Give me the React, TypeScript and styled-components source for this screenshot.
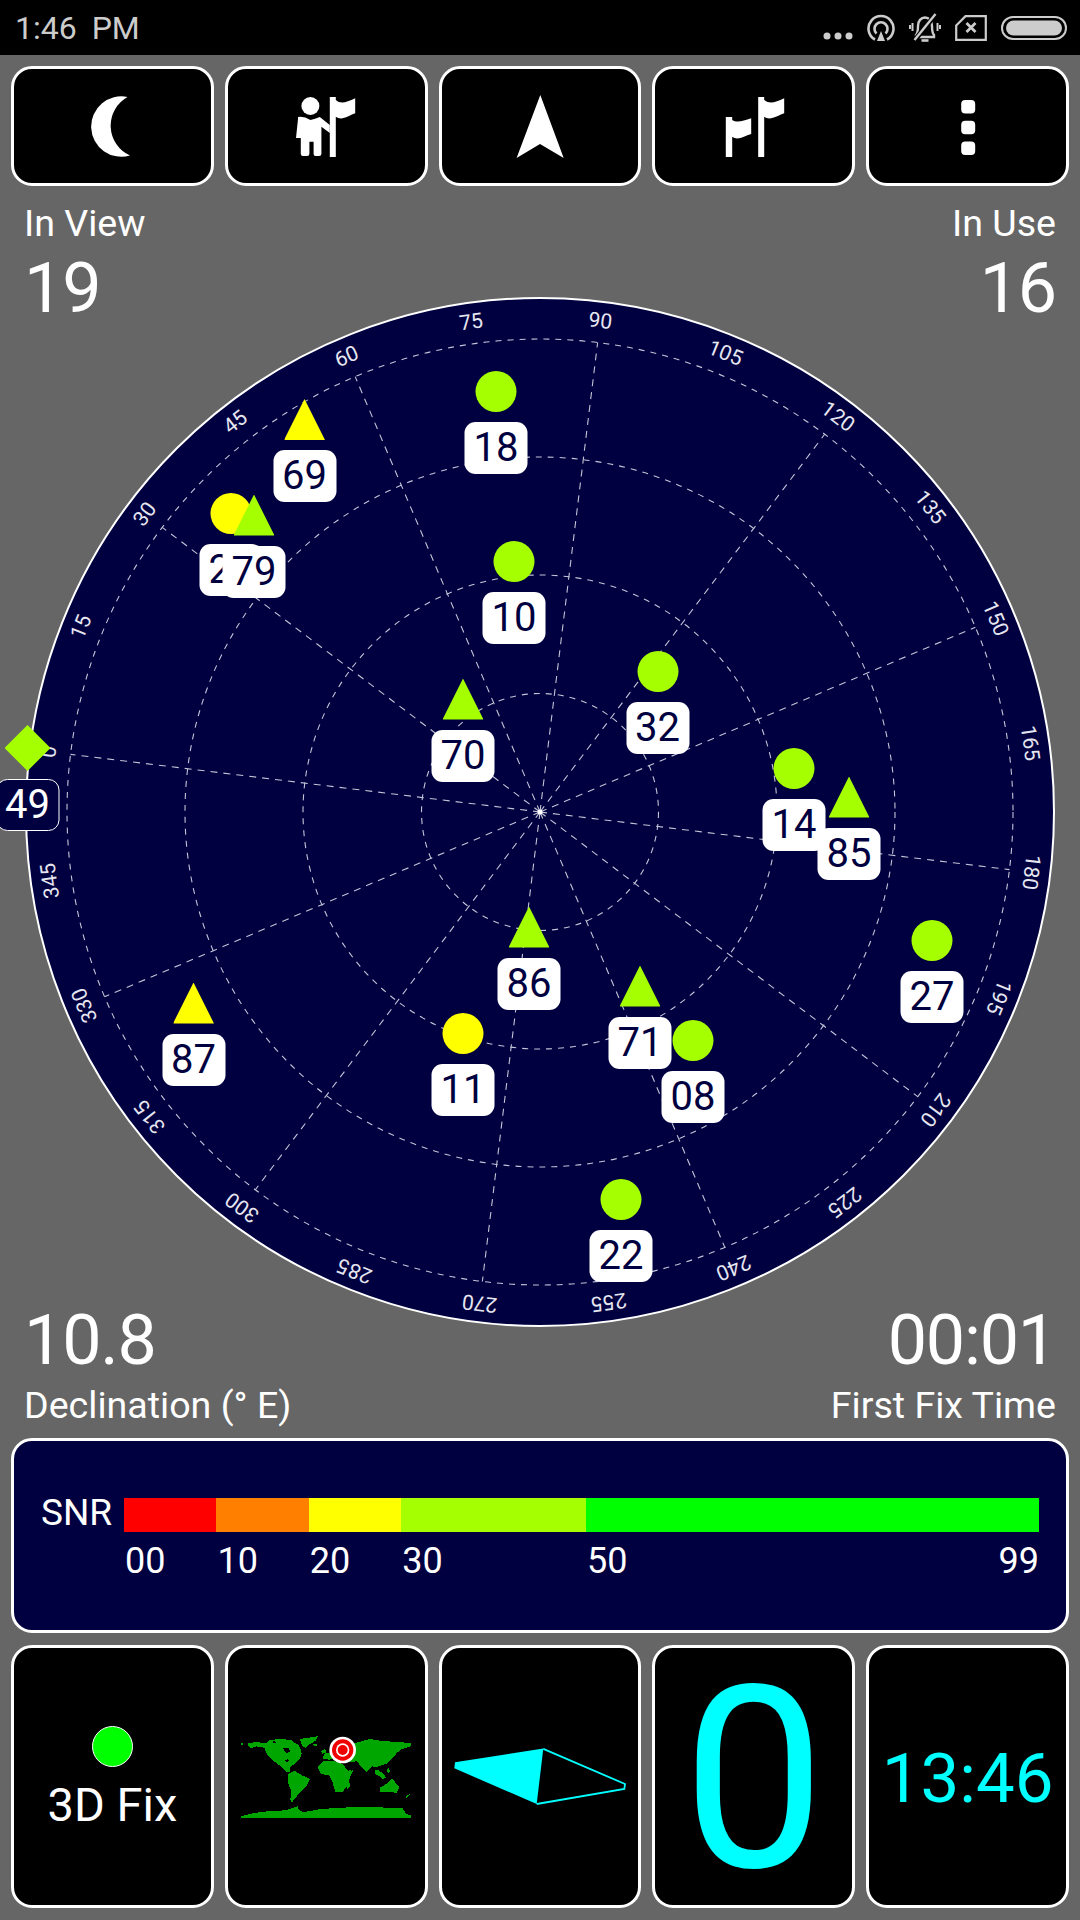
import styled, { createGlobalStyle } from "styled-components"

const GlobalStyle = createGlobalStyle`
    html, body {
        margin: 0;
        padding: 0;
        background: #666666;
        overflow: hidden;
    }
    * {
        box-sizing: border-box;
    }
`

const NAVY = "#000040"
const LIME = "#a6ff00"
const YELLOW = "#ffff00"
const CYAN = "#00ffff"

const Page = styled.div`
    width: 1080px;
    height: 1920px;
    display: flex;
    flex-direction: column;
    background: #666666;
    color: #fff;
    font-family: Roboto, "Liberation Sans", sans-serif;
    overflow: hidden;
`

const StatusBar = styled.div`
    height: 55px;
    flex: none;
    background: #000;
    display: flex;
    align-items: center;
    justify-content: space-between;
    padding: 0 13px 0 15px;
    color: #cccccc;
`

const Clock = styled.span`
    font-size: 32px;
    font-weight: 400;
    word-spacing: 7px;
    line-height: 55px;
    padding-top: 2px;
`

const StatusIcons = styled.div`
    display: flex;
    align-items: center;
    gap: 14px;
`

const Toolbar = styled.div`
    flex: none;
    display: grid;
    grid-template-columns: repeat(5, 1fr);
    gap: 11px;
    padding: 11px 11px 0;
`

const Tile = styled.div<{ $height: number }>`
    height: ${(p) => p.$height}px;
    background: #000;
    border: 3px solid #fff;
    border-radius: 21px;
    display: flex;
    flex-direction: column;
    align-items: center;
    justify-content: center;
`

const PlotSection = styled.div`
    flex: 1;
    min-height: 0;
    display: grid;
    grid-template: 1fr / 1fr;
`

const Dial = styled.div`
    grid-area: 1 / 1;
    place-self: center;
    position: relative;
    width: 1080px;
    height: 1040px;
`

const StatRow = styled.div<{ $bottom?: boolean }>`
    grid-area: 1 / 1;
    align-self: ${(p) => (p.$bottom ? "end" : "start")};
    display: flex;
    justify-content: space-between;
    padding: ${(p) => (p.$bottom ? "0 24px 11px 24px" : "15px 24px 0 24px")};
    position: relative;
`

const Stat = styled.div<{ $right?: boolean }>`
    display: flex;
    flex-direction: column;
    gap: 3px;
    align-items: ${(p) => (p.$right ? "flex-end" : "flex-start")};
`

const StatLabel = styled.div`
    font-size: 37.6px;
    line-height: 44px;
`

const StatValue = styled.div`
    font-size: 70px;
    line-height: 80px;
    letter-spacing: -1.2px;
`

const Sat = styled.div<{ $x: number; $y: number }>`
    position: absolute;
    left: ${(p) => p.$x}px;
    top: ${(p) => p.$y - 20.5}px;
    transform: translateX(-50%);
    display: flex;
    flex-direction: column;
    align-items: center;
    gap: 10px;
`

const Marker = styled.div<{ $shape: "circle" | "tri" | "dia"; $color: string }>`
    width: 41px;
    height: 41px;
    background: ${(p) => p.$color};
    border-radius: ${(p) => (p.$shape === "circle" ? "50%" : "0")};
    ${(p) => p.$shape === "tri" && "clip-path: polygon(50% 0, 100% 100%, 0 100%);"}
    ${(p) =>
        p.$shape === "dia" &&
        "clip-path: polygon(50% 0, 100% 50%, 50% 100%, 0 50%); width: 46px; height: 46px; margin: -2.5px 0;"}
`

const SatTag = styled.div<{ $dark?: boolean }>`
    width: 63px;
    height: 52px;
    border-radius: 11px;
    background: ${(p) => (p.$dark ? NAVY : "#fff")};
    color: ${(p) => (p.$dark ? "#fff" : NAVY)};
    border: ${(p) => (p.$dark ? "1.5px solid #fff" : "none")};
    font-size: 40px;
    line-height: ${(p) => (p.$dark ? "49px" : "52px")};
    text-align: center;
    white-space: nowrap;
    overflow: hidden;
`

const SnrPanel = styled.div`
    flex: none;
    height: 195px;
    margin: 0 11px;
    padding: 57px 27px 0;
    background: ${NAVY};
    border: 3px solid #fff;
    border-radius: 21px;
`

const SnrRow = styled.div`
    display: flex;
    height: 34px;
`

const SnrTitle = styled.div`
    width: 83px;
    flex: none;
    font-size: 37px;
    line-height: 30px;
`

const SnrBand = styled.div<{ $span: number; $color: string }>`
    flex: ${(p) => p.$span};
    background: ${(p) => p.$color};
`

const ScaleRow = styled.div`
    display: flex;
    margin: 9px 0 0 84px;
`

const ScaleCell = styled.div<{ $span: number }>`
    flex: ${(p) => p.$span};
    display: flex;
    justify-content: space-between;
    font-size: 36px;
    line-height: 40px;
`

const BottomRow = styled.div`
    flex: none;
    display: grid;
    grid-template-columns: repeat(5, 1fr);
    gap: 11px;
    padding: 12px 11px;
`

const FixDot = styled.div`
    width: 41px;
    height: 41px;
    border-radius: 50%;
    background: #00ff00;
    border: 1.5px solid #fff;
    margin-top: 5px;
`

const FixLabel = styled.div`
    font-size: 47px;
    line-height: 54px;
    margin-top: 11px;
`

const BigZero = styled.div`
    font-size: 254px;
    line-height: 250px;
    margin-top: 6px;
    color: ${CYAN};
`

const ClockValue = styled.div`
    font-size: 69px;
    line-height: 80px;
    margin-top: 4px;
    color: ${CYAN};
`

const CX = 540
const CY = 520
const TILT = 7

const polar = (angle: number, r: number) => {
    const t = ((angle + TILT) * Math.PI) / 180
    return { x: CX - r * Math.cos(t), y: CY - r * Math.sin(t) }
}

const spokes = Array.from({ length: 12 }, (_, i) => i * 30)
const ticks = Array.from({ length: 24 }, (_, i) => i * 15)

// marker centres, inside the dial box
const sats = [
    { id: "18", x: 496, y: 99, shape: "circle", color: LIME },
    { id: "69", x: 304.5, y: 127.5, shape: "tri", color: YELLOW },
    { id: "27", x: 231, y: 221, shape: "circle", color: YELLOW },
    { id: "79", x: 254, y: 223, shape: "tri", color: LIME },
    { id: "10", x: 514, y: 269, shape: "circle", color: LIME },
    { id: "32", x: 657.5, y: 379, shape: "circle", color: LIME },
    { id: "70", x: 463, y: 407, shape: "tri", color: LIME },
    { id: "14", x: 794, y: 476, shape: "circle", color: LIME },
    { id: "85", x: 849, y: 505, shape: "tri", color: LIME },
    { id: "49", x: 27.5, y: 456, shape: "dia", color: LIME },
    { id: "86", x: 529, y: 635, shape: "tri", color: LIME },
    { id: "27", x: 932, y: 648, shape: "circle", color: LIME },
    { id: "87", x: 193.5, y: 711, shape: "tri", color: YELLOW },
    { id: "11", x: 463, y: 741.5, shape: "circle", color: YELLOW },
    { id: "71", x: 640, y: 694, shape: "tri", color: LIME },
    { id: "08", x: 693, y: 748, shape: "circle", color: LIME },
    { id: "22", x: 621, y: 907, shape: "circle", color: LIME },
] as const

const PolarGrid = () => (
    <svg width="1080" height="1040" viewBox="0 0 1080 1040" style={{ display: "block" }}>
        <circle cx={CX} cy={CY} r={514} fill={NAVY} stroke="#fff" strokeWidth="2" />
        {[118.5, 237, 355, 473].map((r) => (
            <circle
                key={r}
                cx={CX}
                cy={CY}
                r={r}
                fill="none"
                stroke="#c4c4d8"
                strokeWidth="1.1"
                strokeDasharray="6 6"
            />
        ))}
        {spokes.map((a) => {
            const end = polar(a, 473)
            return (
                <line
                    key={a}
                    x1={CX}
                    y1={CY}
                    x2={end.x}
                    y2={end.y}
                    stroke="#c4c4d8"
                    strokeWidth="1.1"
                    strokeDasharray="7 6"
                />
            )
        })}
        <circle cx={CX} cy={CY} r={2.5} fill="#fff" />
        {ticks.map((a) => {
            const p = polar(a, 495)
            return (
                <text
                    key={a}
                    x={p.x}
                    y={p.y}
                    fill="#e6e6f0"
                    fontFamily="Roboto, sans-serif"
                    fontSize="21"
                    textAnchor="middle"
                    dominantBaseline="central"
                    transform={`rotate(${a + TILT - 90} ${p.x} ${p.y})`}
                >
                    {a}
                </text>
            )
        })}
    </svg>
)

const MoonIcon = () => (
    <svg width="64" height="64" viewBox="0 0 64 64">
        <path d="M47.5 3A30.2 30.2 0 1 0 50 61.5A32.75 32.75 0 0 1 47.5 3Z" fill="#fff" />
    </svg>
)

const BIG_FLAG = "M36.2 3H42.2V63H36.2Z M42.2 6C47 10 53 9 62.2 4.3V19.3C55 22 48 27 42.2 22.7Z"

const PersonFlagIcon = () => (
    <svg width="64" height="64" viewBox="0 0 64 64">
        <circle cx="16.4" cy="12" r="9" fill="#fff" />
        <path
            d="M4 23Q10 22 16.4 26Q21 25 25.8 23L35.8 31V39L27.4 32.7V60Q27.4 62 25 62H21.5Q19.6 62 19.6 60V47.7H15.4V60Q15.4 62 13 62H9Q6.8 62 6.8 60V44H2L4 25Z"
            fill="#fff"
        />
        <path d="M35.8 3H41.8V63H35.8Z M41.8 6C46 10 52 9 61.2 4.3V19.3C54 22 48 27 41.8 22.7Z" fill="#fff" />
    </svg>
)

const ArrowIcon = () => (
    <svg width="64" height="64" viewBox="0 0 64 64">
        <path d="M32.3 1L55.7 64L32 50L8.6 64Z" fill="#fff" />
    </svg>
)

const FlagsIcon = () => (
    <svg width="64" height="64" viewBox="0 0 64 64">
        <path d="M3.8 23H10.2V63H3.8Z M10.2 26C15 29 21 27 29.2 24.3V40C22 42 16 47 10.2 42.7Z" fill="#fff" />
        <path d={BIG_FLAG} fill="#fff" />
    </svg>
)

const MenuIcon = () => (
    <svg width="64" height="64" viewBox="0 0 64 64">
        <rect x="25.2" y="6" width="14" height="13.5" rx="4" fill="#fff" />
        <rect x="25.2" y="26.7" width="14" height="13.5" rx="4" fill="#fff" />
        <rect x="25.2" y="47.5" width="14" height="13.5" rx="4" fill="#fff" />
    </svg>
)

const DotsIcon = () => (
    <svg width="30" height="28" viewBox="0 0 30 28">
        <circle cx="4" cy="22" r="3.5" fill="#ccc" />
        <circle cx="15" cy="22" r="3.5" fill="#ccc" />
        <circle cx="26" cy="22" r="3.5" fill="#ccc" />
    </svg>
)

const CastIcon = () => (
    <svg width="28" height="28" viewBox="0 0 28 28" fill="none" stroke="#ccc" strokeWidth="2.6">
        <path d="M8 25.5A12.5 12.5 0 1 1 20 25.5" />
        <path d="M9.5 19.5A6.5 6.5 0 1 1 18.5 19.5" />
        <path d="M14 17L18 27H10Z" fill="#ccc" stroke="none" />
    </svg>
)

const BellIcon = () => (
    <svg width="32" height="30" viewBox="0 0 32 30" fill="none" stroke="#ccc" strokeWidth="2.4">
        <path d="M7 22C9 20 9 17 9 13C9 8 12 4.5 16 4.5C20 4.5 23 8 23 13C23 17 23 20 25 22V24H7Z" />
        <path d="M12.5 27.5H19.5" strokeWidth="2.6" />
        <path d="M27 1L5 28" stroke="#000" strokeWidth="5" />
        <path d="M26.5 1L5.5 27" />
        <path d="M3.5 10V18M1 12V16M28.5 10V18M31 12V16" strokeWidth="2" />
    </svg>
)

const SimIcon = () => (
    <svg width="32" height="26" viewBox="0 0 32 26" fill="none" stroke="#ccc" strokeWidth="2.2">
        <path d="M1.2 10.5L10.5 1.2H30.8V24.8H1.2Z" />
        <path d="M11.5 8L20.5 17M20.5 8L11.5 17" strokeWidth="2.8" />
    </svg>
)

const BatteryIcon = () => (
    <svg width="66" height="24" viewBox="0 0 66 24">
        <rect x="1" y="1" width="64" height="22" rx="11" fill="none" stroke="#ccc" strokeWidth="2" />
        <rect x="5" y="4.5" width="56" height="15" rx="7.5" fill="#ccc" />
    </svg>
)

const LAND = [
    // north america
    "M15 42L22 42L22 48L15 48Z M35 44L60 39L82 42L95 40L100 33L135 30L165 33L176 42L186 46L195 62L197 74L190 92L178 103L165 112L160 120L163 128L150 128L135 112L118 100L104 88L94 78L85 56L60 52L45 58L38 54Z",
    // greenland
    "M190 30L245 22L240 35L222 45L208 56L200 52L195 40Z",
    // south america
    "M155 135L175 125L200 140L222 150L212 170L192 190L180 205L168 220L163 212L166 185L155 160Z",
    // africa
    "M245 115L262 96L290 95L320 105L335 125L352 122L342 145L335 170L320 188L298 190L290 160L280 140L255 135Z",
    // eurasia
    "M258 88L268 72L285 70L290 48L340 45L358 42L400 30L440 36L525 42L525 52L498 60L482 72L470 88L450 105L435 110L420 114L408 112L392 130L378 116L362 96L350 100L335 98L325 92L300 94L280 92Z",
    // islands
    "M256 66L268 60L270 72L258 74Z M232 46L244 44L244 50L234 52Z M415 125L425 122L440 132L450 145L440 150L428 140L418 135Z M452 122L458 118L462 128L455 132Z M440 90L448 86L452 96L444 100Z",
    // madagascar
    "M334 166L342 160L342 174L334 180Z",
    // australia
    "M432 176L450 165L468 150L478 160L490 175L482 192L462 188L445 188L432 190Z",
    // new zealand
    "M508 204L515 198L522 194L520 200L512 208Z",
    // antarctica
    "M15 262L55 252L100 246L150 244L185 232L188 240L200 250L255 240L340 235L430 235L500 238L510 255L525 260V268H15Z",
]

// hudson bay, great lakes, arctic channel, mediterranean and the red sea
const WATER = [
    "M142 58L157 56L162 67L151 73L144 66Z",
    "M146 94L156 90L160 96L150 99Z",
    "M110 37L124 38L120 42L112 41Z",
    "M272 92L308 90L320 94L300 96Z",
    "M331 106L335 106L349 124L345 125Z",
]

const WorldMap = () => (
    <svg width="180" height="95" viewBox="0 0 540 285">
        {LAND.map((d) => (
            <path key={d.slice(0, 12)} d={d} fill="#00a600" shapeRendering="crispEdges" />
        ))}
        {WATER.map((d) => (
            <path key={d.slice(0, 12)} d={d} fill="#000" shapeRendering="crispEdges" />
        ))}
        <circle cx="320" cy="63" r="40" fill="#fff" />
        <circle cx="320" cy="63" r="32" fill="#f00000" />
        <circle cx="320" cy="63" r="20" fill="#fff" />
        <circle cx="320" cy="63" r="15" fill="#f00000" />
    </svg>
)

const CompassIcon = () => (
    <svg width="172" height="57" viewBox="0 0 172 57">
        <polygon points="1,14.3 89.3,0.5 82.7,56 0.3,20.3" fill={CYAN} />
        <polyline
            points="89.3,0.8 171,36 170.3,41 82.7,56"
            fill="none"
            stroke={CYAN}
            strokeWidth="1.8"
        />
    </svg>
)

const App = () => {
    return (
        <Page>
            <GlobalStyle />

            <StatusBar>
                <Clock>1:46 PM</Clock>
                <StatusIcons>
                    <DotsIcon />
                    <CastIcon />
                    <BellIcon />
                    <SimIcon />
                    <BatteryIcon />
                </StatusIcons>
            </StatusBar>

            <Toolbar>
                <Tile $height={120}><MoonIcon /></Tile>
                <Tile $height={120}><PersonFlagIcon /></Tile>
                <Tile $height={120}><ArrowIcon /></Tile>
                <Tile $height={120}><FlagsIcon /></Tile>
                <Tile $height={120}><MenuIcon /></Tile>
            </Toolbar>

            <PlotSection>
                <Dial>
                    <PolarGrid />
                    {sats.map((s) => (
                        <Sat key={`${s.id}-${s.x}`} $x={s.x} $y={s.y}>
                            <Marker $shape={s.shape} $color={s.color} />
                            <SatTag $dark={s.shape === "dia"}>{s.id}</SatTag>
                        </Sat>
                    ))}
                </Dial>

                <StatRow>
                    <Stat>
                        <StatLabel>In View</StatLabel>
                        <StatValue>19</StatValue>
                    </Stat>
                    <Stat $right>
                        <StatLabel>In Use</StatLabel>
                        <StatValue>16</StatValue>
                    </Stat>
                </StatRow>

                <StatRow $bottom>
                    <Stat>
                        <StatValue>10.8</StatValue>
                        <StatLabel>Declination (° E)</StatLabel>
                    </Stat>
                    <Stat $right>
                        <StatValue>00:01</StatValue>
                        <StatLabel>First Fix Time</StatLabel>
                    </Stat>
                </StatRow>
            </PlotSection>

            <SnrPanel>
                <SnrRow>
                    <SnrTitle>SNR</SnrTitle>
                    <SnrBand $span={10} $color="#ff0000" />
                    <SnrBand $span={10} $color="#ff8000" />
                    <SnrBand $span={10} $color="#ffff00" />
                    <SnrBand $span={20} $color="#a6ff00" />
                    <SnrBand $span={49} $color="#00ff00" />
                </SnrRow>
                <ScaleRow>
                    <ScaleCell $span={10}>00</ScaleCell>
                    <ScaleCell $span={10}>10</ScaleCell>
                    <ScaleCell $span={10}>20</ScaleCell>
                    <ScaleCell $span={20}>30</ScaleCell>
                    <ScaleCell $span={48.9}>
                        <span>50</span>
                        <span>99</span>
                    </ScaleCell>
                </ScaleRow>
            </SnrPanel>

            <BottomRow>
                <Tile $height={263}>
                    <FixDot />
                    <FixLabel>3D Fix</FixLabel>
                </Tile>
                <Tile $height={263}><WorldMap /></Tile>
                <Tile $height={263}><CompassIcon /></Tile>
                <Tile $height={263}><BigZero>0</BigZero></Tile>
                <Tile $height={263}><ClockValue>13:46</ClockValue></Tile>
            </BottomRow>
        </Page>
    )
}

export default App
